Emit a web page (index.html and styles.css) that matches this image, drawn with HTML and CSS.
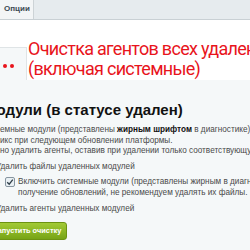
FILE: index.html
```html
<!DOCTYPE html>
<html lang="ru">
<head>
    <meta charset="UTF-8">
    <title>Очистка модулей</title>
    <link rel="stylesheet" href="styles.css">
</head>
<body>
    <div class="tabs">
        <div class="tab">Опции</div>
    </div>

    <div class="top-space"></div>

    <div class="note-row">
        <div class="side">
            <span class="dot"></span>
            <span class="dot"></span>
        </div>
        <div class="note">Очистка агентов всех удаленных модулей<br>(включая системные)</div>
    </div>

    <div class="content">
        <h2>Модули (в статусе удален)</h2>
        <p class="desc">
            емные модули (представлены <b>жирным шрифтом</b> в диагностике) будут обновлены<br>
            икс при следующем обновлении платформы.<br>
            но удалить агенты, оставив при удалении только соответствующую настройку.
        </p>

        <label class="opt">Удалить файлы удаленных модулей</label>

        <label class="opt sub">
            <svg class="check" width="10" height="10" viewBox="0 0 10 10">
                <rect x="0.5" y="0.5" width="9" height="9" rx="1.5" fill="#e9f0f4" stroke="#8795a0"/>
                <path d="M2.2 5.2 L4.2 7.2 L7.8 2.6" fill="none" stroke="#2f3e48" stroke-width="1.3"/>
            </svg>
            <span>Включить системные модули (представлены жирным в диагностике)<br>
            получение обновлений, не рекомендуем удалять их файлы.</span>
        </label>

        <label class="opt">Удалить агенты удаленных модулей</label>

        <button class="run-btn">Запустить очистку</button>
    </div>
</body>
</html>
```

FILE: styles.css
```css
* {
    margin: 0;
    padding: 0;
    box-sizing: border-box;
}

body {
    width: 250px;
    height: 250px;
    overflow: hidden;
    background: #f5f8f9;
    font-family: 'Liberation Sans', Arial, sans-serif;
    color: #3b3b3b;
}

.tabs {
    height: 20px;
    background: #e6ebee;
    border-bottom: 1px solid #c9d0d4;
    display: flex;
    align-items: flex-end;
}

.tab {
    width: 34px;
    height: 19px;
    background: #f3f5f6;
    border-right: 1px solid #cdd3d6;
    font-size: 8px;
    font-weight: bold;
    color: #3c4a52;
    padding: 4px 0 0 4px;
}

.top-space {
    height: 27px;
    background: #fff;
}

.note-row {
    display: flex;
    height: 33px;
}

.side {
    width: 27px;
    border-top: 1px solid #dfe4e6;
    border-right: 1px solid #dfe4e6;
    display: flex;
    align-items: center;
    gap: 3px;
    padding: 4px 0 0 3px;
}

.dot {
    width: 4px;
    height: 4px;
    border-radius: 50%;
    background: #e8141c;
}

.note {
    flex: 1;
    background: #fff;
    margin-top: -8px;
    padding-left: 1px;
    font-family: Roboto, 'Liberation Sans', sans-serif;
    font-size: 18px;
    letter-spacing: -0.7px;
    line-height: 20px;
    color: #e8141c;
    white-space: nowrap;
    overflow: hidden;
    height: 41px;
}

.content {
    padding-top: 21px;
    white-space: nowrap;
}

h2 {
    font-size: 15px;
    line-height: 18px;
    font-weight: bold;
    color: #111;
    margin-left: -16px;
    margin-bottom: 6px;
}

.desc {
    font-size: 8.2px;
    line-height: 10.5px;
    color: #4a4a4a;
}

.desc b {
    color: #111;
}

.opt {
    display: flex;
    align-items: flex-start;
    gap: 3px;
    font-size: 8.2px;
    line-height: 11px;
    color: #4a4a4a;
    margin-top: 4px;
    margin-left: -4px;
}

.opt.sub {
    margin-left: 5px;
    margin-top: 4px;
}

.opt.sub + .opt {
    margin-top: 5px;
}

.check {
    flex: none;
    margin-top: 1px;
}

.run-btn {
    display: block;
    margin-top: 8px;
    margin-left: -20px;
    height: 18px;
    padding: 0 5px 0 12px;
    border: 1px solid #6c9312;
    border-radius: 3px;
    background: linear-gradient(#a2ca36, #77a416);
    color: #fff;
    font-family: 'Liberation Sans', Arial, sans-serif;
    font-size: 7.4px;
    font-weight: bold;
}
```
